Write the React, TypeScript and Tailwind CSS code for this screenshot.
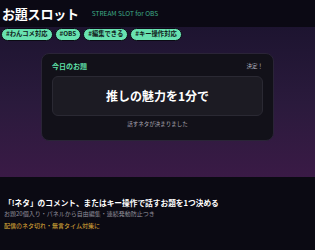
const TAGS = ['#わんコメ対応', '#OBS', '#編集できる', '#キー操作対応']

export default function App() {
  return (
    <div
      className="w-[315px] h-[250px] flex flex-col bg-[#0b0a13] overflow-hidden"
      style={{ fontFamily: '"Noto Sans CJK JP", "Noto Sans", sans-serif' }}
    >
      {/* header */}
      <div className="h-[27px] flex items-center gap-[13px] px-[2px] bg-[#0b0914]">
        <h1 className="text-[13px] font-bold text-white leading-none tracking-[-0.2px]">お題スロット</h1>
        <span className="text-[6.5px] text-[#3fae88] mt-[1px]">STREAM SLOT for OBS</span>
      </div>

      {/* stage */}
      <div className="h-[150px] flex flex-col bg-gradient-to-b from-[#1d1430] via-[#2a1a3c] to-[#3a1a46]">
        <div className="flex gap-[2px] px-[1px] pt-[1px]">
          {TAGS.map((t) => (
            <span
              key={t}
              className="h-[13px] flex items-center px-[4px] rounded-full bg-[#68e2b0] border border-[#0b0a13] text-[6.3px] font-bold text-[#10201a] leading-none"
            >
              {t}
            </span>
          ))}
        </div>

        <div className="mx-auto mt-[12px] w-[233px] h-[88px] rounded-[8px] bg-[#121119] border border-[#2a2437] px-[10px] pt-[9px] flex flex-col">
          <div className="flex items-center justify-between">
            <span className="text-[7px] font-bold text-[#5fe0a8] leading-none">今日のお題</span>
            <span className="text-[5.5px] text-[#b8b6c0] leading-none">決定！</span>
          </div>
          <div className="mt-[6px] h-[40px] rounded-[6px] bg-[#1c1b23] border border-[#2a2933] flex items-center justify-center">
            <span className="text-[12px] font-bold text-white leading-none">推しの魅力を1分で</span>
          </div>
          <div className="mt-[6px] text-center text-[5.5px] text-[#a9a7b2] leading-none">話すネタが決まりました</div>
        </div>
      </div>

      {/* description */}
      <div className="flex-1 flex flex-col px-[4px] pt-[22px] gap-[4px] bg-[#0b0a13]">
        <p className="text-[7.7px] font-bold text-white leading-none">「!ネタ」のコメント、またはキー操作で話すお題を1つ決める</p>
        <p className="text-[6px] text-[#92909c] leading-none">お題20個入り・パネルから自由編集・連続発動防止つき</p>
        <p className="text-[6px] text-[#e0b23a] leading-none mt-[2px]">配信のネタ切れ・無言タイム対策に</p>
      </div>
    </div>
  )
}
